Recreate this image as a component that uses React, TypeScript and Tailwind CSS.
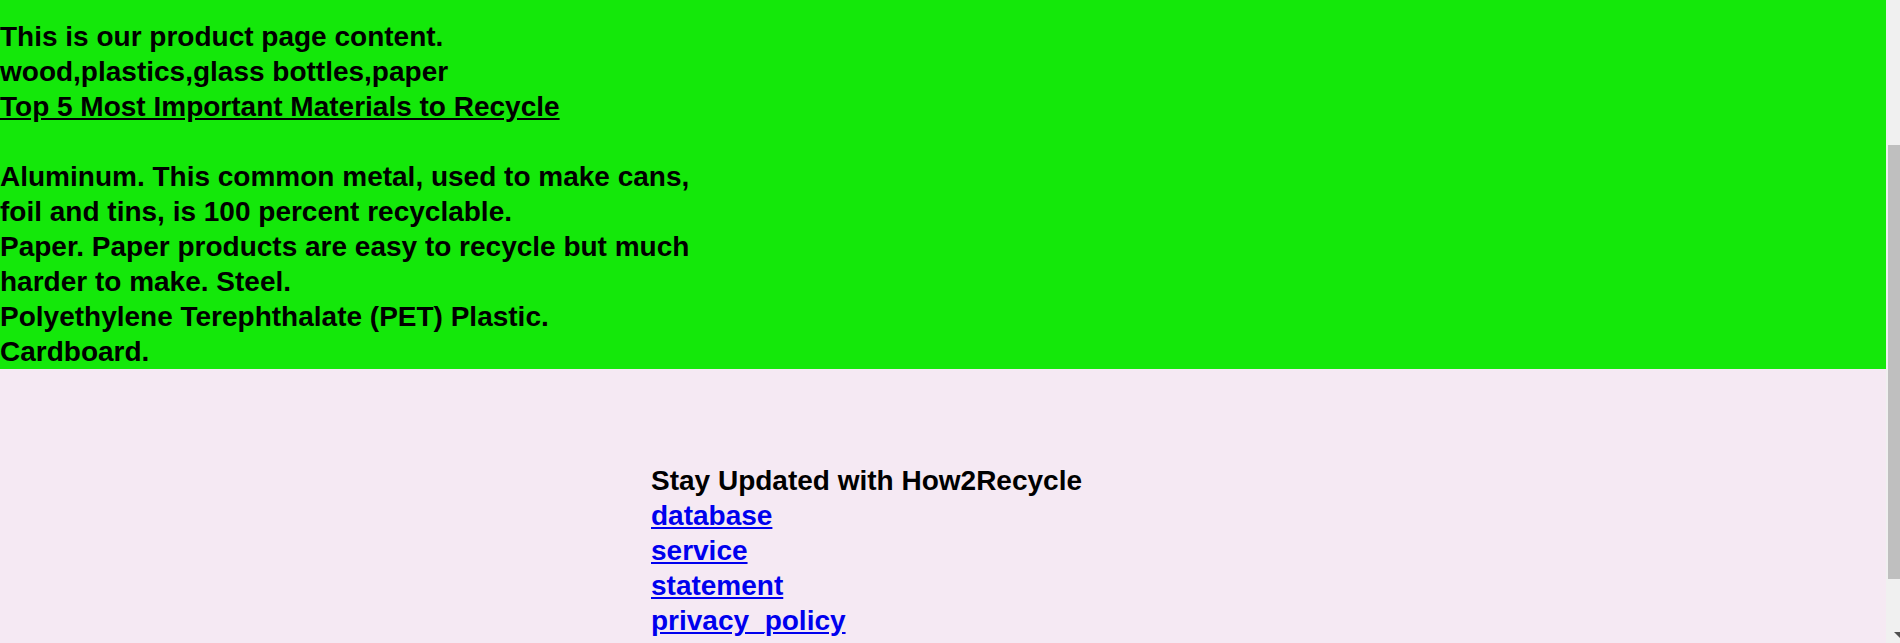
import React from 'react';

const materials = [
  ['Aluminum. This common metal, used to make cans,', 'foil and tins, is 100 percent recyclable.'],
  ['Paper. Paper products are easy to recycle but much', 'harder to make. Steel.'],
  ['Polyethylene Terephthalate (PET) Plastic.'],
  ['Cardboard.'],
];

const footerLinks = ['database', 'service', 'statement', 'privacy_policy'];

export default function App() {
  return (
    <div className="flex h-screen overflow-hidden font-['Liberation_Sans',Arial,sans-serif] font-bold text-[28px] leading-[35px] text-black">
      <div className="flex-1 flex flex-col bg-[#f5e9f3]">
        <section className="bg-[#14e80a] pt-[19px]">
          <p>This is our product page content.</p>
          <p>wood,plastics,glass bottles,paper</p>
          <a href="#" className="underline">
            Top 5 Most Important Materials to Recycle
          </a>
          <div className="mt-[35px]">
            {materials.map((lines, i) => (
              <p key={i}>
                {lines.map((l, j) => (
                  <React.Fragment key={j}>
                    {j > 0 && <br />}
                    {l}
                  </React.Fragment>
                ))}
              </p>
            ))}
          </div>
        </section>

        <footer className="pt-[94px] pl-[651px]">
          <h3>Stay Updated with How2Recycle</h3>
          <ul className="flex flex-col">
            {footerLinks.map((l) => (
              <li key={l}>
                <a href="#" className="text-[#0000ee] underline">
                  {l}
                </a>
              </li>
            ))}
          </ul>
        </footer>
      </div>

      {/* window scrollbar */}
      <div className="w-[14px] shrink-0 flex flex-col bg-[#f0f0f0] pl-[2px]">
        <div className="h-[145px]" />
        <div className="h-[434px] bg-[#bfbfbf]" />
        <div className="h-[53px]" />
        <svg width="6" height="8" viewBox="0 0 6 8" className="ml-[6px]">
          <polygon points="0,0 6,0 6,6" fill="#505050" />
        </svg>
      </div>
    </div>
  );
}
